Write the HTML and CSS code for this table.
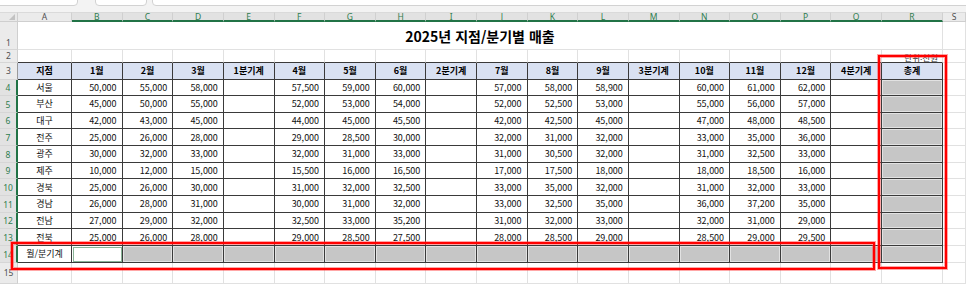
FILE: index.html
```html
<!DOCTYPE html>
<html lang="ko">
<head>
<meta charset="utf-8">
<title>2025년 지점/분기별 매출</title>
<link rel="stylesheet" href="styles.css">
</head>
<body>
<div class="page">
  <div class="toolbar">
    <div class="box b1"></div>
    <div class="box b2"></div>
    <div class="box b3"></div>
  </div>
  <div class="sheet">
    <!-- column headers -->
    <div class="corner"><span class="tri"></span></div>
    <div class="ch">A</div>
    <div class="ch sel">B</div><div class="ch sel">C</div><div class="ch sel">D</div><div class="ch sel">E</div>
    <div class="ch sel">F</div><div class="ch sel">G</div><div class="ch sel">H</div><div class="ch sel">I</div>
    <div class="ch sel">J</div><div class="ch sel">K</div><div class="ch sel">L</div><div class="ch sel">M</div>
    <div class="ch sel">N</div><div class="ch sel">O</div><div class="ch sel">P</div><div class="ch sel">Q</div>
    <div class="ch sel">R</div>
    <div class="ch last">S</div>

    <!-- row 1 -->
    <div class="rh r1">1</div>
    <div class="c title">2025년 지점/분기별 매출</div>
    <div class="c"></div>

    <!-- row 2 -->
    <div class="rh">2</div>
    <div class="c ab"></div><div class="c ab"></div><div class="c ab"></div><div class="c ab"></div><div class="c ab"></div><div class="c ab"></div>
    <div class="c ab"></div><div class="c ab"></div><div class="c ab"></div><div class="c ab"></div><div class="c ab"></div><div class="c ab"></div>
    <div class="c ab"></div><div class="c ab"></div><div class="c ab"></div><div class="c ab"></div><div class="c ab"></div>
    <div class="c ab unit">단위:천원</div>
    <div class="c"></div>

    <!-- row 3 -->
    <div class="rh r3">3</div>
    <div class="c t h">지점</div>
    <div class="c t h">1월</div><div class="c t h">2월</div><div class="c t h">3월</div><div class="c t h">1분기계</div>
    <div class="c t h">4월</div><div class="c t h">5월</div><div class="c t h">6월</div><div class="c t h">2분기계</div>
    <div class="c t h">7월</div><div class="c t h">8월</div><div class="c t h">9월</div><div class="c t h">3분기계</div>
    <div class="c t h">10월</div><div class="c t h">11월</div><div class="c t h">12월</div><div class="c t h">4분기계</div>
    <div class="c t h">총계</div>
    <div class="c"></div>

    <!-- row 4 -->
    <div class="rh rs">4</div>
    <div class="c t nm">서울</div>
    <div class="c t n">50,000</div><div class="c t n">55,000</div><div class="c t n">58,000</div><div class="c t"></div>
    <div class="c t n">57,500</div><div class="c t n">59,000</div><div class="c t n">60,000</div><div class="c t"></div>
    <div class="c t n">57,000</div><div class="c t n">58,000</div><div class="c t n">58,900</div><div class="c t"></div>
    <div class="c t n">60,000</div><div class="c t n">61,000</div><div class="c t n">62,000</div><div class="c t"></div>
    <div class="c t g"></div>
    <div class="c"></div>

    <!-- row 5 -->
    <div class="rh rs">5</div>
    <div class="c t nm">부산</div>
    <div class="c t n">45,000</div><div class="c t n">50,000</div><div class="c t n">55,000</div><div class="c t"></div>
    <div class="c t n">52,000</div><div class="c t n">53,000</div><div class="c t n">54,000</div><div class="c t"></div>
    <div class="c t n">52,000</div><div class="c t n">52,500</div><div class="c t n">53,000</div><div class="c t"></div>
    <div class="c t n">55,000</div><div class="c t n">56,000</div><div class="c t n">57,000</div><div class="c t"></div>
    <div class="c t g"></div>
    <div class="c"></div>

    <!-- row 6 -->
    <div class="rh rs">6</div>
    <div class="c t nm">대구</div>
    <div class="c t n">42,000</div><div class="c t n">43,000</div><div class="c t n">45,000</div><div class="c t"></div>
    <div class="c t n">44,000</div><div class="c t n">45,000</div><div class="c t n">45,500</div><div class="c t"></div>
    <div class="c t n">42,000</div><div class="c t n">42,500</div><div class="c t n">45,000</div><div class="c t"></div>
    <div class="c t n">47,000</div><div class="c t n">48,000</div><div class="c t n">48,500</div><div class="c t"></div>
    <div class="c t g"></div>
    <div class="c"></div>

    <!-- row 7 -->
    <div class="rh rs">7</div>
    <div class="c t nm">전주</div>
    <div class="c t n">25,000</div><div class="c t n">26,000</div><div class="c t n">28,000</div><div class="c t"></div>
    <div class="c t n">29,000</div><div class="c t n">28,500</div><div class="c t n">30,000</div><div class="c t"></div>
    <div class="c t n">32,000</div><div class="c t n">31,000</div><div class="c t n">32,000</div><div class="c t"></div>
    <div class="c t n">33,000</div><div class="c t n">35,000</div><div class="c t n">36,000</div><div class="c t"></div>
    <div class="c t g"></div>
    <div class="c"></div>

    <!-- row 8 -->
    <div class="rh rs">8</div>
    <div class="c t nm">광주</div>
    <div class="c t n">30,000</div><div class="c t n">32,000</div><div class="c t n">33,000</div><div class="c t"></div>
    <div class="c t n">32,000</div><div class="c t n">31,000</div><div class="c t n">33,000</div><div class="c t"></div>
    <div class="c t n">31,000</div><div class="c t n">30,500</div><div class="c t n">32,000</div><div class="c t"></div>
    <div class="c t n">31,000</div><div class="c t n">32,500</div><div class="c t n">33,000</div><div class="c t"></div>
    <div class="c t g"></div>
    <div class="c"></div>

    <!-- row 9 -->
    <div class="rh rs">9</div>
    <div class="c t nm">제주</div>
    <div class="c t n">10,000</div><div class="c t n">12,000</div><div class="c t n">15,000</div><div class="c t"></div>
    <div class="c t n">15,500</div><div class="c t n">16,000</div><div class="c t n">16,500</div><div class="c t"></div>
    <div class="c t n">17,000</div><div class="c t n">17,500</div><div class="c t n">18,000</div><div class="c t"></div>
    <div class="c t n">18,000</div><div class="c t n">18,500</div><div class="c t n">16,000</div><div class="c t"></div>
    <div class="c t g"></div>
    <div class="c"></div>

    <!-- row 10 -->
    <div class="rh rs">10</div>
    <div class="c t nm">경북</div>
    <div class="c t n">25,000</div><div class="c t n">26,000</div><div class="c t n">30,000</div><div class="c t"></div>
    <div class="c t n">31,000</div><div class="c t n">32,000</div><div class="c t n">32,500</div><div class="c t"></div>
    <div class="c t n">33,000</div><div class="c t n">35,000</div><div class="c t n">32,000</div><div class="c t"></div>
    <div class="c t n">31,000</div><div class="c t n">32,000</div><div class="c t n">33,000</div><div class="c t"></div>
    <div class="c t g"></div>
    <div class="c"></div>

    <!-- row 11 -->
    <div class="rh rs">11</div>
    <div class="c t nm">경남</div>
    <div class="c t n">26,000</div><div class="c t n">28,000</div><div class="c t n">31,000</div><div class="c t"></div>
    <div class="c t n">30,000</div><div class="c t n">31,000</div><div class="c t n">32,000</div><div class="c t"></div>
    <div class="c t n">33,000</div><div class="c t n">32,500</div><div class="c t n">35,000</div><div class="c t"></div>
    <div class="c t n">36,000</div><div class="c t n">37,200</div><div class="c t n">35,000</div><div class="c t"></div>
    <div class="c t g"></div>
    <div class="c"></div>

    <!-- row 12 -->
    <div class="rh rs">12</div>
    <div class="c t nm">전남</div>
    <div class="c t n">27,000</div><div class="c t n">29,000</div><div class="c t n">32,000</div><div class="c t"></div>
    <div class="c t n">32,500</div><div class="c t n">33,000</div><div class="c t n">35,200</div><div class="c t"></div>
    <div class="c t n">31,000</div><div class="c t n">32,000</div><div class="c t n">33,000</div><div class="c t"></div>
    <div class="c t n">32,000</div><div class="c t n">31,000</div><div class="c t n">29,000</div><div class="c t"></div>
    <div class="c t g"></div>
    <div class="c"></div>

    <!-- row 13 -->
    <div class="rh rs">13</div>
    <div class="c t nm">전북</div>
    <div class="c t n">25,000</div><div class="c t n">26,000</div><div class="c t n">28,000</div><div class="c t"></div>
    <div class="c t n">29,000</div><div class="c t n">28,500</div><div class="c t n">27,500</div><div class="c t"></div>
    <div class="c t n">28,000</div><div class="c t n">28,500</div><div class="c t n">29,000</div><div class="c t"></div>
    <div class="c t n">28,500</div><div class="c t n">29,000</div><div class="c t n">29,500</div><div class="c t"></div>
    <div class="c t g"></div>
    <div class="c"></div>

    <!-- row 14 -->
    <div class="rh rs">14</div>
    <div class="c t nm">월/분기계</div>
    <div class="c t active"></div>
    <div class="c t g"></div><div class="c t g"></div><div class="c t g"></div>
    <div class="c t g"></div><div class="c t g"></div><div class="c t g"></div><div class="c t g"></div>
    <div class="c t g"></div><div class="c t g"></div><div class="c t g"></div><div class="c t g"></div>
    <div class="c t g"></div><div class="c t g"></div><div class="c t g"></div><div class="c t g"></div>
    <div class="c t g"></div>
    <div class="c"></div>

    <!-- row 15 -->
    <div class="rh">15</div>
    <div class="c"></div><div class="c"></div><div class="c"></div><div class="c"></div><div class="c"></div><div class="c"></div>
    <div class="c"></div><div class="c"></div><div class="c"></div><div class="c"></div><div class="c"></div><div class="c"></div>
    <div class="c"></div><div class="c"></div><div class="c"></div><div class="c"></div><div class="c"></div><div class="c"></div>
    <div class="c"></div>
  </div>
  <div class="mark mark-row"></div>
  <div class="mark mark-col"></div>
</div>
</body>
</html>
```

FILE: styles.css
```css
* { box-sizing: border-box; }
html, body { margin: 0; padding: 0; background: #fff; }
body { width: 966px; height: 284px; overflow: hidden; font-family: "Noto Sans CJK KR", "Noto Sans", sans-serif; }

.page { position: relative; width: 966px; height: 284px; }

.toolbar {
  height: 12px;
  background: #f3f3f3;
  display: flex;
  align-items: flex-start;
}
.box {
  height: 8px;
  margin-top: -2px;
  background: #fff;
  border: 1px solid #d2d2d2;
  border-radius: 0 0 4px 4px;
}
.b1 { width: 82px; margin-left: -4px; }
.b2 { width: 52px; margin-left: 17px; }
.b3 { flex: 1; margin-left: 5px; margin-right: -6px; }

.sheet {
  display: grid;
  grid-template-columns: 18px 54px repeat(16, 50.625px) 61px 1fr;
  grid-template-rows: 10px 28px 13px 16.5px repeat(11, 16.66px) 1fr;
  height: 272px;
}

.corner {
  background: #e9e9e9;
  border-right: 1px solid #cfcfcf;
  border-bottom: 1px solid #cfcfcf;
  border-top: 1px solid #dadada;
  position: relative;
}
.tri {
  position: absolute;
  right: 2px;
  bottom: 1px;
  width: 0;
  height: 0;
  border-left: 6px solid transparent;
  border-bottom: 6px solid #c2c2c2;
}

.ch {
  background: #ebebeb;
  border-right: 1px solid #d0d0d0;
  border-bottom: 1px solid #cfcfcf;
  border-top: 1px solid #dadada;
  font: 8.5px/1 "Noto Sans", "DejaVu Sans", sans-serif;
  color: #505050;
  display: flex;
  align-items: center;
  justify-content: center;
  padding-top: 1px;
}
.ch.sel {
  background: #e2e2e2;
  color: #2e7d4f;
  border-bottom: 2px solid #217346;
}

.rh {
  background: #ebebeb;
  border-right: 1px solid #cfcfcf;
  border-bottom: 1px solid #d6d6d6;
  font: 8.5px/1 "Noto Sans", "DejaVu Sans", sans-serif;
  color: #505050;
  display: flex;
  align-items: center;
  justify-content: center;
}
.rh.r1 { align-items: flex-end; padding-bottom: 2px; }
.rh.r3 { border-right: 1px solid #9a9a9a; }
.rh.rs {
  background: #e2e2e2;
  color: #2e7d4f;
  border-right: 2px solid #217346;
  padding-top: 2px;
}

.c {
  border-right: 1px solid #e1e1e1;
  border-bottom: 1px solid #e1e1e1;
  font-size: 9px;
  color: #111;
  display: flex;
  align-items: center;
  white-space: nowrap;
  overflow: hidden;
  min-width: 0;
}

.title {
  grid-column: 2 / span 18;
  justify-content: center;
  font-size: 14px;
  font-weight: bold;
  color: #000;
  padding-top: 1px;
}

.ab { border-bottom-color: #3a3a3a; }
.unit {
  justify-content: flex-end;
  align-items: flex-end;
  padding-right: 4px;
  font-size: 8.5px;
  line-height: 10px;
  color: #333;
  overflow: visible;
}

.t {
  border-right-color: #3a3a3a;
  border-bottom-color: #3a3a3a;
}
.h {
  background: #d9e1f2;
  font-weight: bold;
  justify-content: center;
  color: #000;
}
.nm { justify-content: center; }
.n { justify-content: flex-end; padding-right: 5px; }
.g {
  background: #c6c6c6;
  box-shadow: inset 0 0 0 1px #e2e2e2;
}
.active {
  outline: 1px solid #8ab598;
  outline-offset: -2px;
}

.mark {
  position: absolute;
  border: 2px solid #ff0000;
  box-shadow: 0 0 0 1px rgba(255, 60, 60, 0.45), inset 0 0 0 1px rgba(255, 60, 60, 0.45);
  pointer-events: none;
}
.mark-row { left: 11px; top: 242px; width: 864px; height: 28px; }
.mark-col { left: 878px; top: 55px; width: 69px; height: 214px; }
```
